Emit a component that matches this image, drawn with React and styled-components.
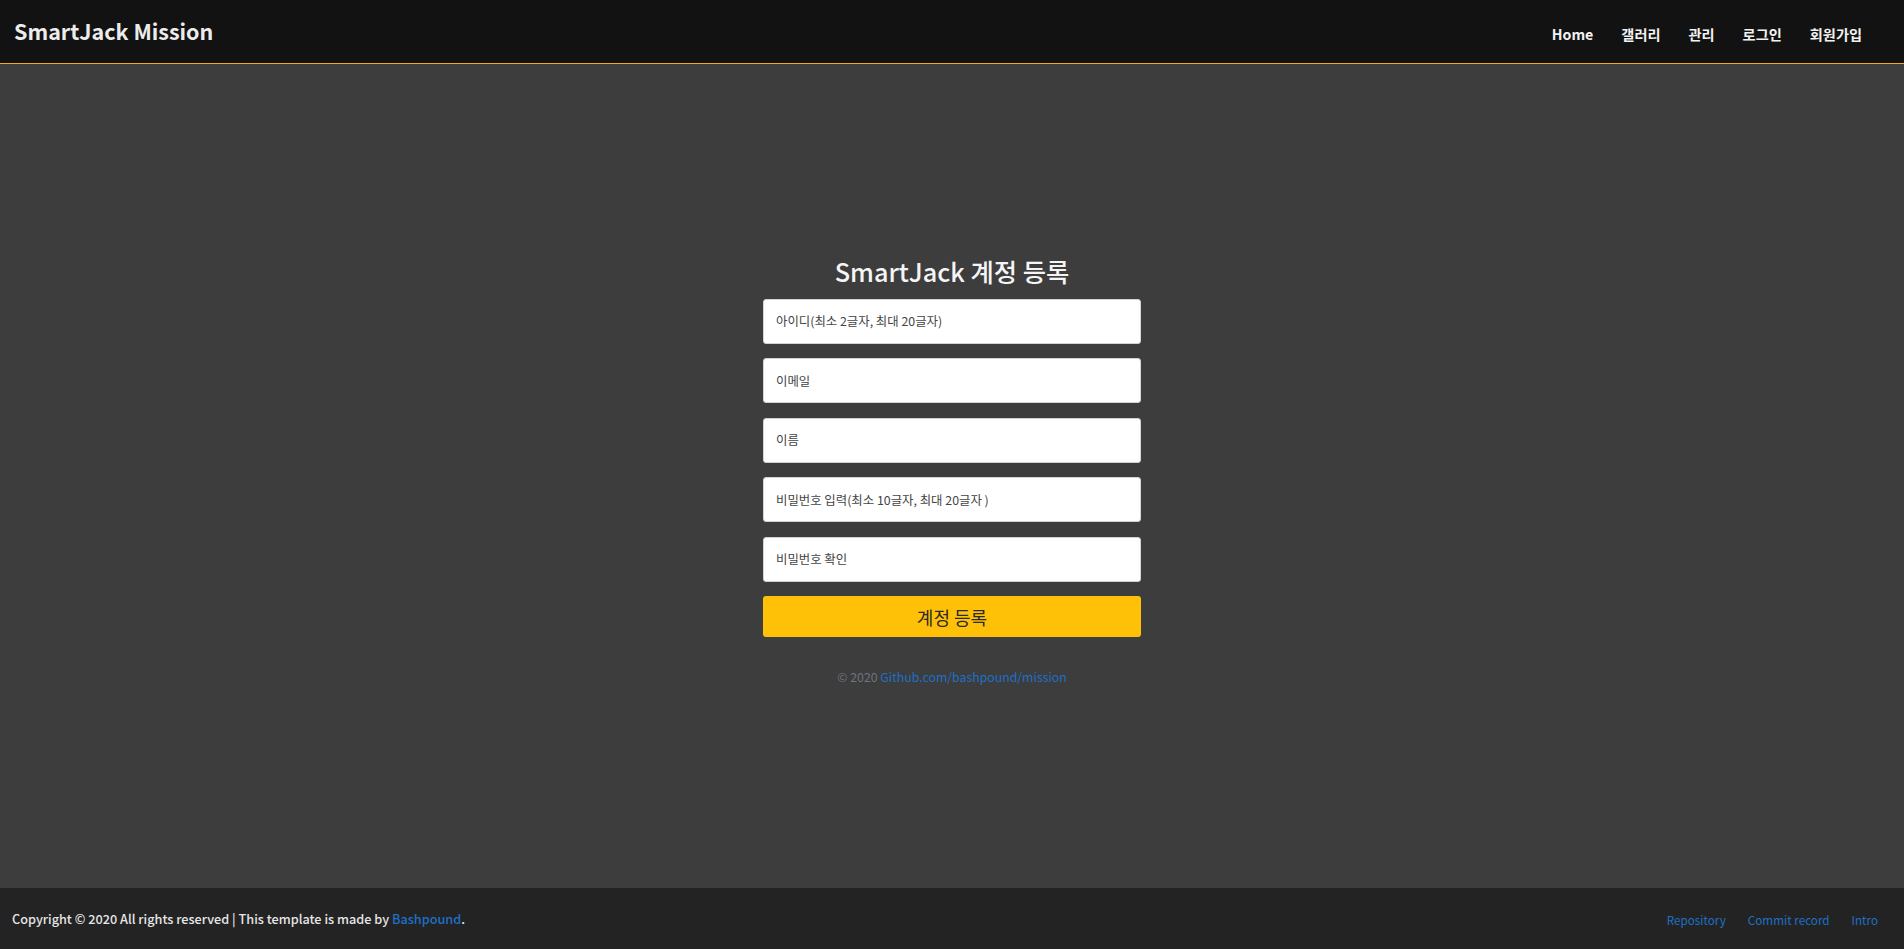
import React from "react";
import styled, { createGlobalStyle } from "styled-components";

const GlobalStyle = createGlobalStyle`
  html, body {
    margin: 0;
    padding: 0;
    height: 100%;
  }
  body {
    font-family: "Noto Sans CJK KR", "Noto Sans", sans-serif;
    background: #3d3d3d;
  }
  #root {
    height: 100%;
  }
  * {
    box-sizing: border-box;
  }
`;

const Page = styled.div`
  display: flex;
  flex-direction: column;
  height: 949px;
`;

const Header = styled.header`
  height: 64px;
  flex-shrink: 0;
  background: #121212;
  border-bottom: 1px solid #f5a623;
  display: flex;
  align-items: center;
  justify-content: space-between;
  padding: 0 0 0 14px;
`;

const Brand = styled.a`
  color: #ececec;
  font-size: 21.5px;
  font-weight: 700;
  text-decoration: none;
  margin-top: -3px;
`;

const Nav = styled.nav`
  display: flex;
  align-items: center;
  padding-right: 28px;
  margin-top: 4px;
`;

const NavLink = styled.a`
  color: #f2f2f2;
  font-size: 14.2px;
  font-weight: 700;
  padding: 0 14px;
  text-decoration: none;
`;

const Main = styled.main`
  flex: 1;
  display: flex;
  align-items: center;
  justify-content: center;
  background: #3d3d3d;
`;

const Form = styled.form`
  width: 378px;
  display: flex;
  flex-direction: column;
  align-items: stretch;
  margin-top: -12px;
`;

const Title = styled.h1`
  margin: 0 0 11px;
  text-align: center;
  color: #f5f5f5;
  font-size: 25.3px;
  font-weight: 500;
  line-height: 34px;
`;

const Input = styled.input`
  height: 45px;
  margin-bottom: 14.5px;
  border: 1px solid #ced4da;
  border-radius: 3px;
  background: #fff;
  padding: 0 12px;
  font-family: inherit;
  font-size: 12.4px;
  color: #333;
  &::placeholder {
    color: #444;
  }
`;

const Submit = styled.button`
  height: 41px;
  border: none;
  border-radius: 3px;
  background: #ffc107;
  color: #2a2a2a;
  font-family: inherit;
  font-size: 18px;
  font-weight: 400;
  cursor: pointer;
`;

const Credit = styled.p`
  margin: 31px 0 0;
  text-align: center;
  color: #6c757d;
  font-size: 12.3px;
`;

const Link = styled.a`
  color: #1e70c6;
  text-decoration: none;
`;

const Footer = styled.footer`
  height: 61px;
  flex-shrink: 0;
  background: #232323;
  display: flex;
  align-items: center;
  justify-content: space-between;
  padding: 0 26px 0 12px;
`;

const FooterText = styled.p`
  margin: 0;
  color: #e6e6e6;
  font-size: 12.7px;
  font-weight: 500;
`;

const FooterLinks = styled.div`
  display: flex;
  gap: 22px;
  font-size: 11.7px;
  margin-top: 2px;
`;

const fields = [
  "아이디(최소 2글자, 최대 20글자)",
  "이메일",
  "이름",
  "비밀번호 입력(최소 10글자, 최대 20글자 )",
  "비밀번호 확인",
];

const App = () => {
  return (
    <>
      <GlobalStyle />
      <Page>
        <Header>
          <Brand href="#">SmartJack Mission</Brand>
          <Nav>
            <NavLink href="#">Home</NavLink>
            <NavLink href="#">갤러리</NavLink>
            <NavLink href="#">관리</NavLink>
            <NavLink href="#">로그인</NavLink>
            <NavLink href="#">회원가입</NavLink>
          </Nav>
        </Header>
        <Main>
          <Form onSubmit={(e) => e.preventDefault()}>
            <Title>SmartJack 계정 등록</Title>
            {fields.map((f, i) => (
              <Input
                key={f}
                type={i >= 3 ? "password" : "text"}
                placeholder={f}
              />
            ))}
            <Submit type="submit">계정 등록</Submit>
            <Credit>
              © 2020 <Link href="#">Github.com/bashpound/mission</Link>
            </Credit>
          </Form>
        </Main>
        <Footer>
          <FooterText>
            Copyright © 2020 All rights reserved | This template is made by{" "}
            <Link href="#">Bashpound</Link>.
          </FooterText>
          <FooterLinks>
            <Link href="#">Repository</Link>
            <Link href="#">Commit record</Link>
            <Link href="#">Intro</Link>
          </FooterLinks>
        </Footer>
      </Page>
    </>
  );
};

export default App;
